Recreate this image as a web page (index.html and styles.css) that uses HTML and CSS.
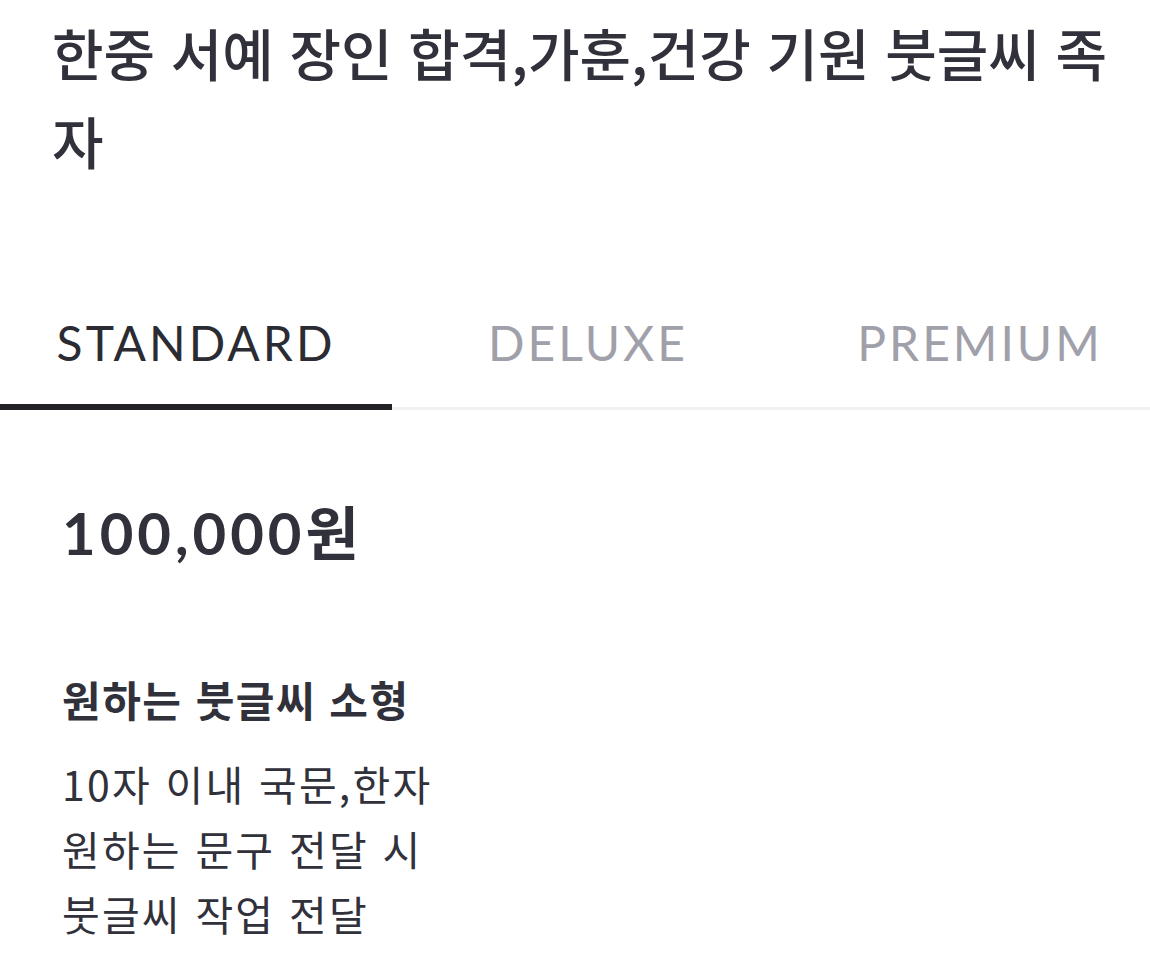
FILE: index.html
```html
<!DOCTYPE html>
<html lang="ko">
<head>
<meta charset="utf-8">
<link rel="stylesheet" href="styles.css">
</head>
<body>
<main class="page">
  <h1 class="title">한중 서예 장인 합격,가훈,건강 기원 붓글씨 족자</h1>
  <nav class="tabs">
    <div class="tab active">STANDARD</div>
    <div class="tab">DELUXE</div>
    <div class="tab">PREMIUM</div>
  </nav>
  <section class="plan">
    <div class="price">100,000원</div>
    <h2 class="plan-name">원하는 붓글씨 소형</h2>
    <p class="plan-desc">10자 이내 국문,한자<br>원하는 문구 전달 시<br>붓글씨 작업 전달</p>
  </section>
</main>
</body>
</html>
```
FILE: styles.css
```css
* { box-sizing: border-box; }
html, body { margin: 0; padding: 0; background: #fff; }
body {
  font-family: "Noto Sans CJK KR", "Noto Sans", sans-serif;
  color: #30313a;
  width: 1150px;
  overflow: hidden;
}
.page { display: flex; flex-direction: column; }
.title {
  margin: 0;
  padding: 8px 30px 0 52px;
  font-size: 56px;
  font-weight: 500;
  line-height: 88px;
  letter-spacing: 0;
}
.tabs {
  display: flex;
  margin-top: 115px;
  border-bottom: 3px solid #f1f1f3;
  width: 1150px;
}
.tab {
  flex: 0 0 392px;
  text-align: center;
  font-family: "Lato", "Noto Sans", sans-serif;
  font-size: 48px;
  font-weight: 400;
  letter-spacing: 3px;
  color: #a0a0aa;
  line-height: 60px;
  padding: 14px 0 31px;
  margin-bottom: -3px;
  border-bottom: 6px solid transparent;
}
.tab.active {
  color: #2b2c33;
  border-bottom-color: #222226;
}
.plan { padding: 88px 52px 0 62px; }
.price {
  font-family: "Lato", "Noto Sans CJK KR", sans-serif;
  font-size: 58px;
  font-weight: 700;
  letter-spacing: 4px;
  line-height: 70px;
}
.plan-name {
  margin: 101px 0 0;
  font-size: 42px;
  font-weight: 700;
  letter-spacing: 1.5px;
  line-height: 60px;
}
.plan-desc {
  margin: 22px 0 0;
  font-size: 41px;
  font-weight: 400;
  letter-spacing: 2.2px;
  line-height: 65px;
}
```
